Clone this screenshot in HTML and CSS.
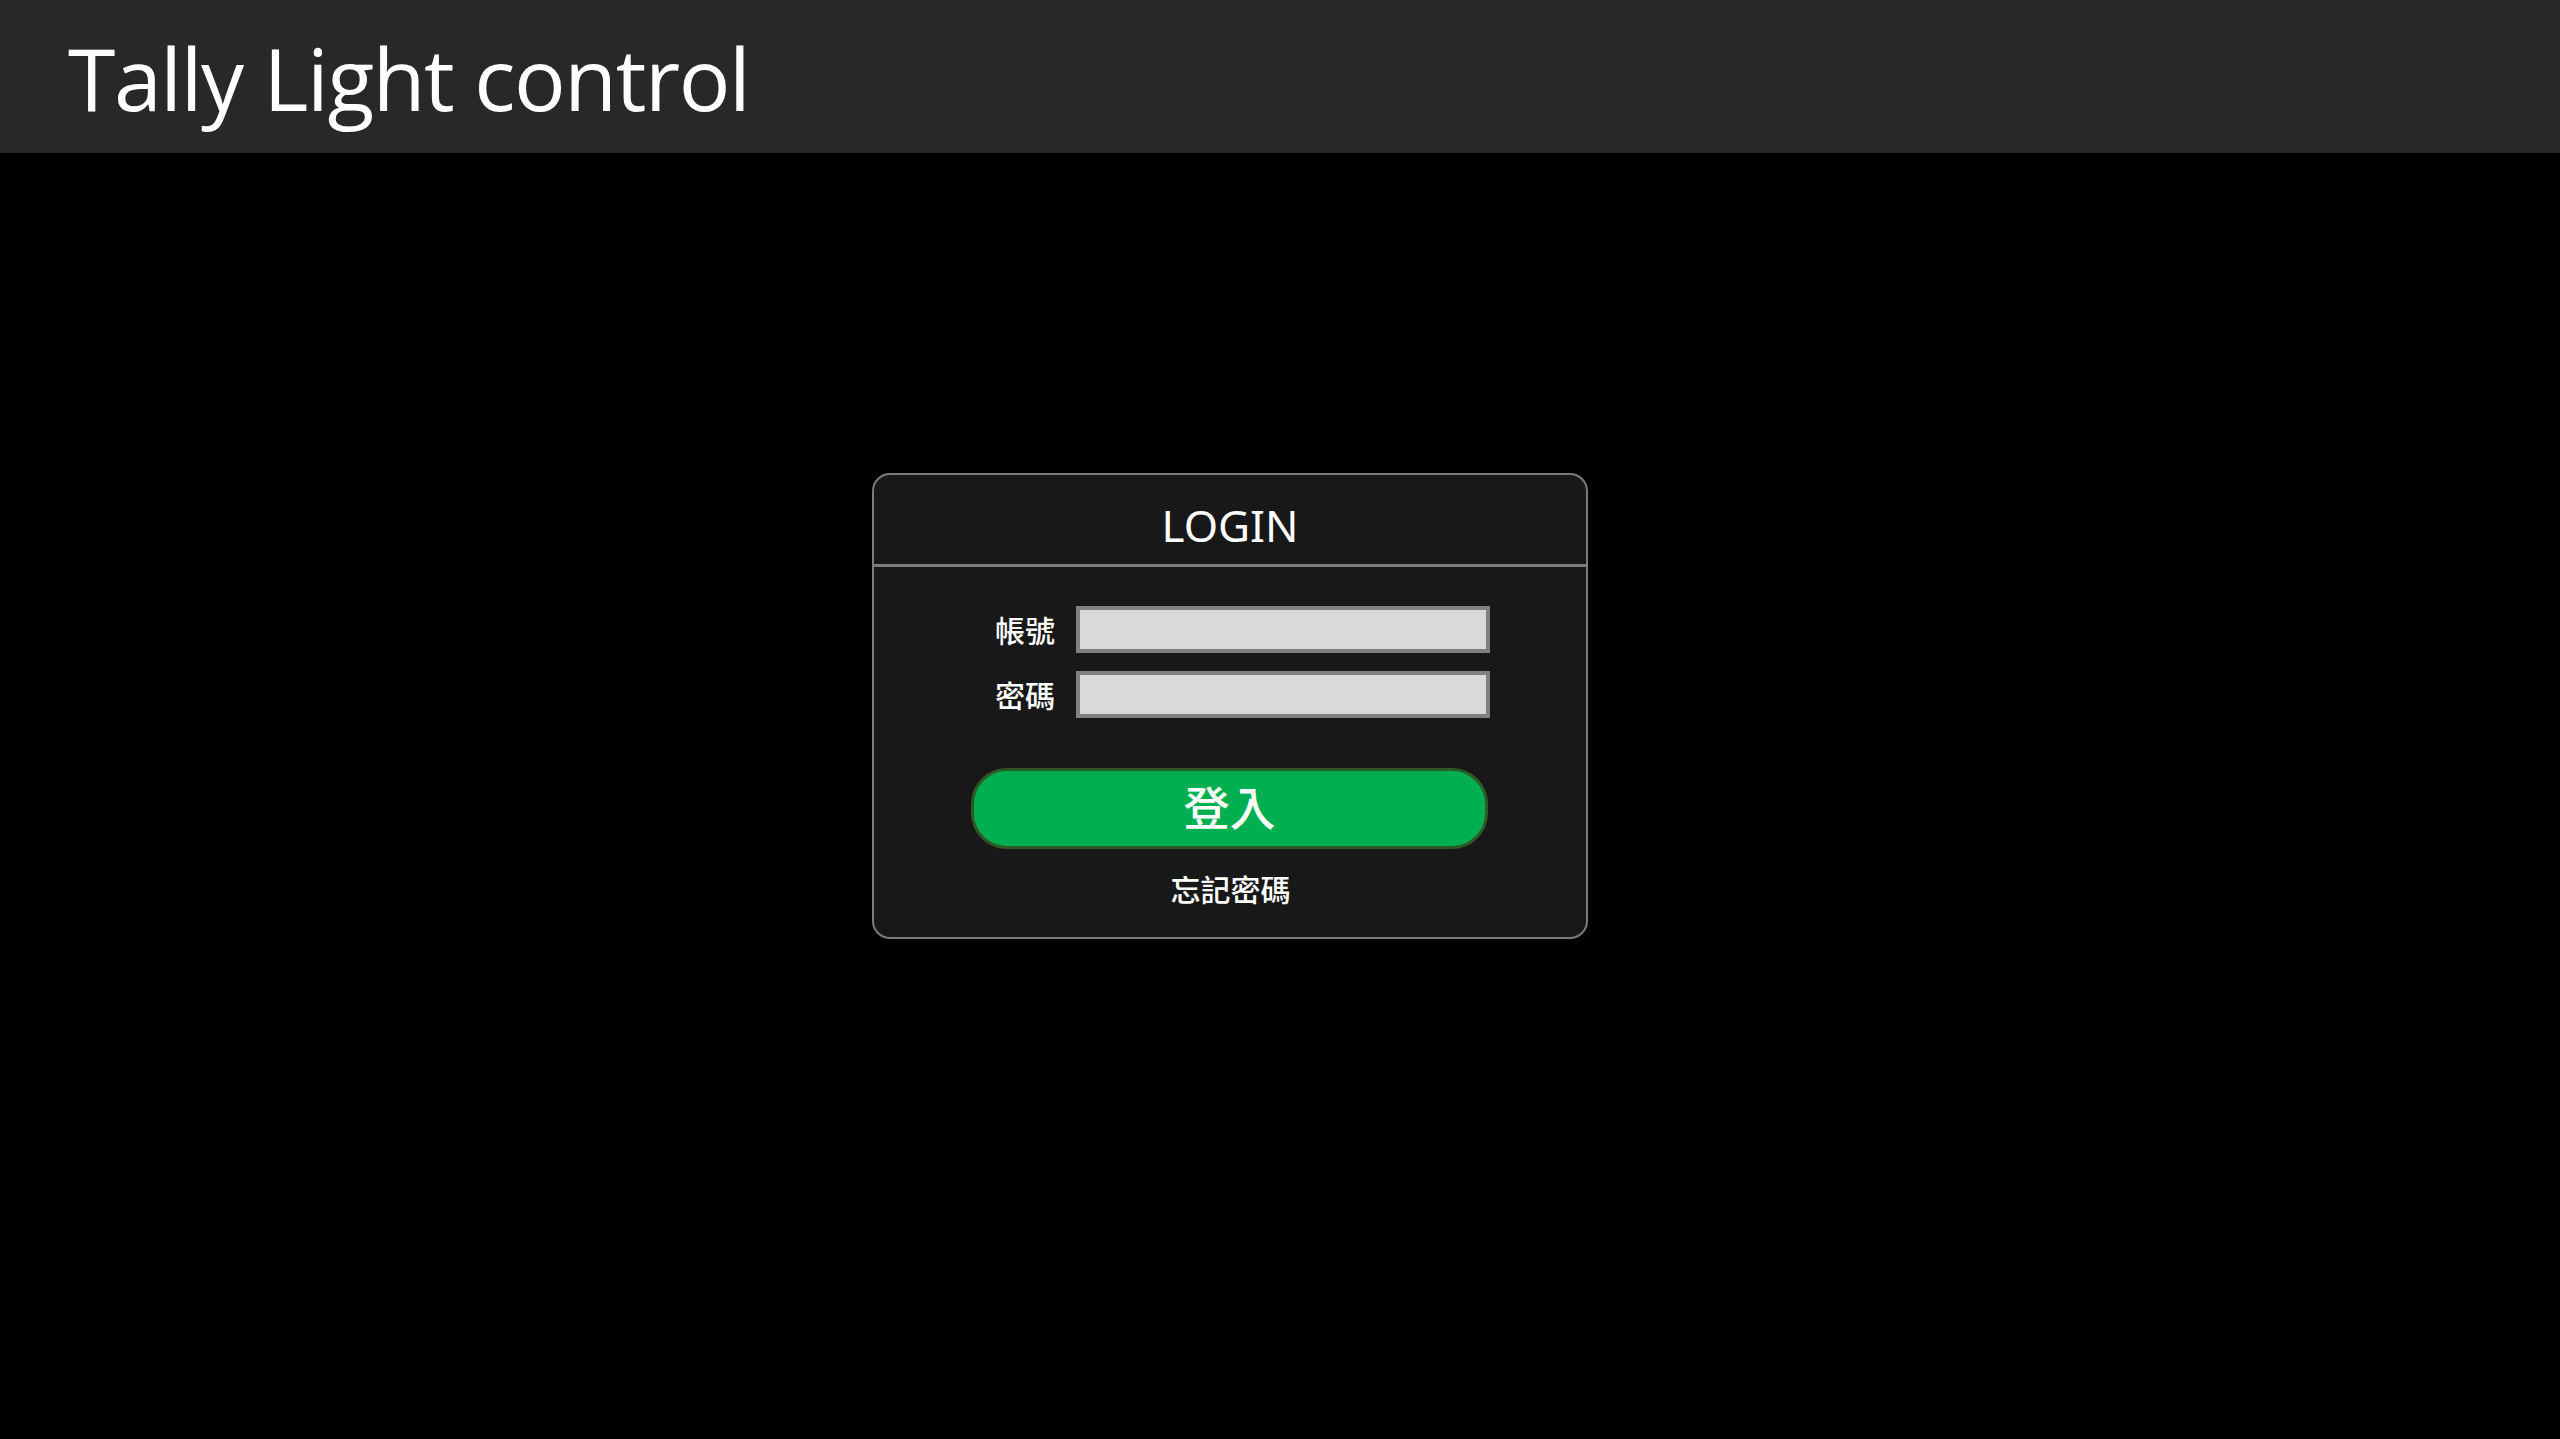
FILE: index.html
```html
<!DOCTYPE html>
<html lang="zh-Hant">
<head>
<meta charset="utf-8">
<title>Tally Light control</title>
<link rel="stylesheet" href="styles.css">
</head>
<body>
<header class="topbar">
  <h1 class="title">Tally Light control</h1>
</header>
<main class="stage">
  <section class="login">
    <div class="login-head">LOGIN</div>
    <form class="login-body">
      <div class="fields">
        <label class="lbl" for="acc">帳號</label>
        <input class="inp" id="acc" type="text">
        <label class="lbl" for="pwd">密碼</label>
        <input class="inp" id="pwd" type="password">
      </div>
      <button class="btn" type="button">登入</button>
      <a class="forgot">忘記密碼</a>
    </form>
  </section>
</main>
</body>
</html>
```

FILE: styles.css
```css
html, body {
  margin: 0;
  padding: 0;
  background: #000;
  color: #fff;
  font-family: "Noto Sans CJK TC", "Noto Sans", sans-serif;
}
.topbar {
  height: 153px;
  background: #282828;
  display: flex;
  align-items: center;
  padding-left: 68px;
  box-sizing: border-box;
}
.title {
  margin: 0;
  font-family: "Open Sans", sans-serif;
  font-weight: 400;
  font-size: 86px;
  line-height: 1;
  letter-spacing: -1.4px;
  color: #fff;
  padding-top: 2px;
}
.stage {
  padding-top: 320px;
}
.login {
  margin-left: 872px;
  width: 716px;
  height: 466px;
  box-sizing: border-box;
  border: 2px solid #7b7b7b;
  border-radius: 18px;
  background: #181818;
  overflow: hidden;
}
.login-head {
  height: 92px;
  border-bottom: 3px solid #7b7b7b;
  display: flex;
  align-items: center;
  justify-content: center;
  font-family: "Noto Sans", sans-serif;
  font-size: 44px;
  padding-top: 10px;
  box-sizing: border-box;
}
.login-body {
  padding: 39px 98px 0 97px;
  display: flex;
  flex-direction: column;
}
.fields {
  display: grid;
  grid-template-columns: 84px 414px;
  column-gap: 21px;
  row-gap: 18px;
  align-items: center;
}
.lbl {
  text-align: right;
  font-size: 30px;
  font-weight: 500;
  line-height: 1;
  padding-bottom: 2px;
}
.inp {
  height: 47px;
  box-sizing: border-box;
  border: 4px solid #808080;
  background: #d9d9d9;
  margin: 0;
  padding: 0 8px;
  font-size: 24px;
  outline: none;
}
.btn {
  margin-top: 50px;
  width: 517px;
  height: 81px;
  box-sizing: border-box;
  border: 3px solid #2e5a25;
  border-radius: 36px;
  background: #00b050;
  color: #fff;
  font-family: "Noto Sans CJK TC", sans-serif;
  font-size: 46px;
  font-weight: 500;
  line-height: 1;
  padding: 0 0 8px 0;
  cursor: pointer;
}
.forgot {
  margin-top: 24px;
  align-self: center;
  margin-left: 2px;
  font-size: 30px;
  font-weight: 500;
  line-height: 1;
  color: #fff;
  cursor: pointer;
}
```
